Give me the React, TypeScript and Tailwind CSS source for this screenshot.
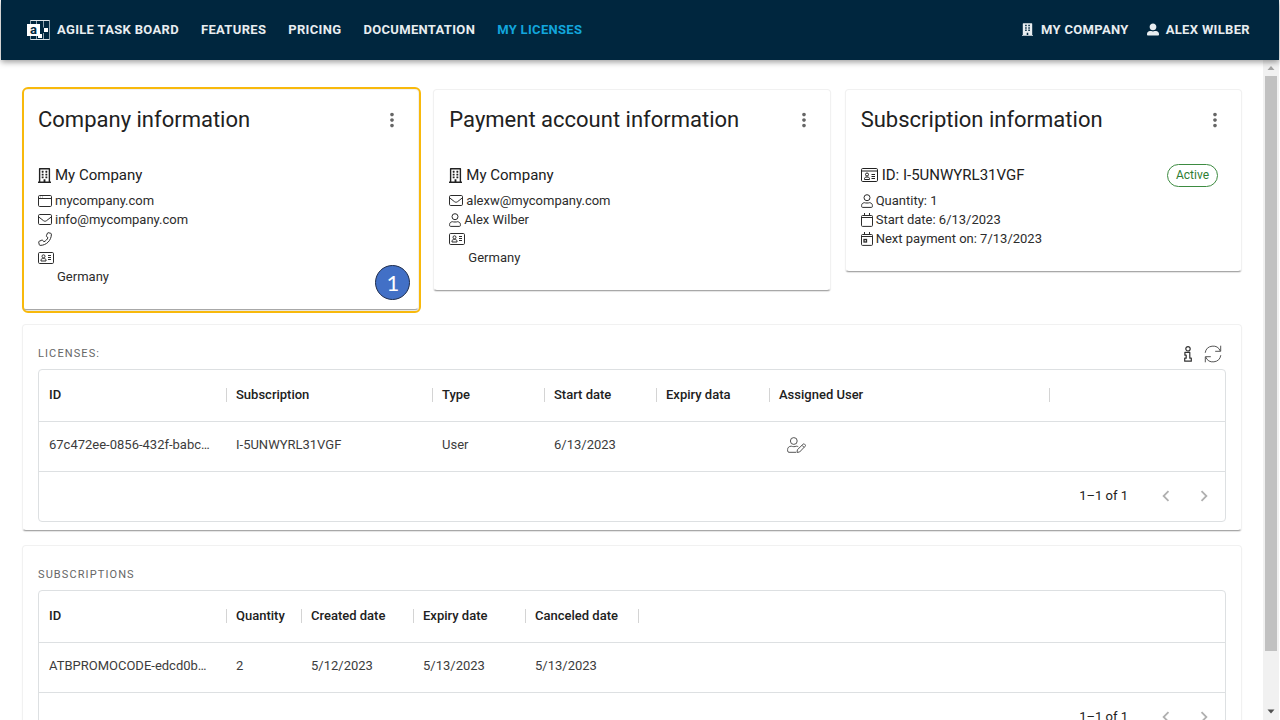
import type { ReactNode } from "react";
import { FaBuilding, FaRegBuilding, FaUserAlt } from "react-icons/fa";
import { MdChevronLeft, MdChevronRight, MdMoreVert } from "react-icons/md";

function Logo() {
  return (
    <svg className="h-5 w-[23px] normal-case" viewBox="0 0 23 20" fill="none" aria-hidden="true">
      <path d="M3.500 .5h19v19h-19zM9.500 .5v19M16.500 .5v7M16.500 13v6" stroke="#8fa3b0" />
      <path d="M3.500 .5h19M3.500 19.500h19" stroke="#dfe5e9" />
      <path d="M0 4h13v10h2v4h-4v-2H0z" fill="#fff" />
      <rect x="17" y="8" width="4" height="4" fill="#fff" />
      <text x="3" y="14" fontSize="13" fontWeight="700" fontFamily="Roboto, sans-serif" fill="#00263e">
        a
      </text>
    </svg>
  );
}

function WindowIcon() {
  return (
    <svg className="h-3 w-[14px]" viewBox="0 0 14 12" fill="none" stroke="currentColor" aria-hidden="true">
      <rect x=".5" y=".5" width="13" height="11" rx="1.200" />
      <path d="M.5 3.500h13" />
      <path d="M2 2h1M4 2h1" opacity=".5" />
    </svg>
  );
}

function EnvelopeIcon() {
  return (
    <svg className="h-[11px] w-[14px]" viewBox="0 0 14 11" fill="none" stroke="currentColor" aria-hidden="true">
      <rect x=".5" y=".5" width="13" height="10" rx="1.200" />
      <path d="M.8 3l4.700 3.700c.900.700 2.100.700 3 0L13.200 3" />
    </svg>
  );
}

function PhoneIcon() {
  return (
    <svg className="size-[14px]" viewBox="0 0 14 14" fill="none" stroke="currentColor" strokeLinejoin="round" aria-hidden="true">
      <path d="M10.200.7l2.500.6c.4.100.7.400.7.800C13.400 8.400 8.400 13.400 2.100 13.400c-.4 0-.7-.3-.8-.7l-.6-2.500c-.1-.4.100-.8.500-.9l2.700-1.200c.3-.1.700 0 .9.300l1.100 1.400c1.900-.9 3.300-2.300 4.100-4.100L8.600 4.600c-.3-.2-.4-.6-.2-.9L9.500 1.100c.1-.3.400-.4.700-.4z" />
    </svg>
  );
}

function AddressCardIcon() {
  return (
    <svg className="h-3 w-4" viewBox="0 0 16 12" fill="none" stroke="currentColor" aria-hidden="true">
      <rect x=".5" y=".5" width="15" height="11" rx="1.200" />
      <circle cx="5.500" cy="4.300" r="1.500" />
      <path d="M3 9V8c0-1 1-1.500 2.500-1.500S8 7 8 8v1zM10 3.500h3M10 5.500h3M10 7.500h3" />
    </svg>
  );
}

function IdCardIcon() {
  return (
    <svg className="h-[14px] w-[17px]" viewBox="0 0 17 14" fill="none" stroke="currentColor" aria-hidden="true">
      <rect x=".5" y=".5" width="16" height="13" rx="1.200" />
      <path d="M1 3h15" />
      <circle cx="6" cy="6.500" r="1.500" />
      <path d="M3.500 11.500v-1c0-1 1-1.500 2.500-1.500s2.500.5 2.500 1.500v1zM10.500 6.500H14M10.500 8.500H14M10.500 10.500H14" />
    </svg>
  );
}

function PersonIcon() {
  return (
    <svg className="h-[14px] w-3" viewBox="0 0 12 14" fill="none" stroke="currentColor" aria-hidden="true">
      <circle cx="6" cy="3.700" r="3" />
      <path d="M3.400 8.700C1.600 8.900.6 10 .6 11.400v1c0 .6.4 1 1 1h8.800c.6 0 1-.4 1-1v-1c0-1.400-1-2.500-2.800-2.700-1 .4-4.200.4-5.200 0z" />
    </svg>
  );
}

function CalendarIcon({ marked = false }: { marked?: boolean }) {
  return (
    <svg className="h-[14px] w-3" viewBox="0 0 12 14" fill="none" stroke="currentColor" aria-hidden="true">
      <rect x=".5" y="2.500" width="11" height="10.900" rx="1" />
      <path d="M.6 4.500h10.800M3.500 0v2.500M8.500 0v2.500" />
      {marked && <rect x="3" y="7.500" width="2.500" height="2.500" strokeWidth="1.300" />}
    </svg>
  );
}

function InfoIcon() {
  return (
    <svg className="h-4 w-2" viewBox="0 0 8 16" fill="none" stroke="currentColor" strokeWidth="1.200" strokeLinejoin="round" aria-hidden="true">
      <circle cx="4" cy="2.800" r="2.200" />
      <path d="M.9 6.400h4.900v5.800h1.500v3H.7v-3h1.500V9.200H.9z" />
    </svg>
  );
}

function RefreshIcon() {
  return (
    <svg className="size-[18px]" viewBox="0 0 18 18" fill="none" stroke="currentColor" aria-hidden="true">
      <path d="M1.200 7.800A7.900 7.900 0 0 1 16.300 6M16.800 10.200A7.900 7.900 0 0 1 1.700 12M16.700.7v5.600h-5.500M1.300 17.300v-5.600h5.500" />
    </svg>
  );
}

function UserEditIcon() {
  return (
    <svg className="h-4 w-[19px]" viewBox="0 0 19 16" fill="none" stroke="currentColor" strokeLinejoin="round" aria-hidden="true">
      <circle cx="6.800" cy="4" r="3.400" />
      <path d="M11.300 9.700c-.6-.3-1.300-.5-2-.5-1.500.6-3.500.6-5 0C2 9.200.6 10.600.6 12.600v1.300c0 .8.600 1.400 1.400 1.400h7.200M10 15.400l.4-2.600 5.700-5.700c.4-.4 1-.4 1.400 0l.7.700c.4.400.4 1 0 1.400L12.600 15zM15 8.300l2.100 2.100" />
    </svg>
  );
}

function InfoCard({
  title,
  heading,
  headingIcon,
  badge,
  children,
  overlay,
}: {
  title: string;
  heading: string;
  headingIcon: ReactNode;
  badge?: ReactNode;
  children: ReactNode;
  overlay?: ReactNode;
}) {
  return (
    <section className="relative rounded border border-[#f1f1f1] border-b-[#a8a8a8] bg-white px-[15px] pt-[14px] pb-[23px] shadow-[0_1px_1px_#e4e4e4]">
      <div className="flex items-center justify-between">
        <h2 className="text-[22px] leading-8 text-[#212121]">{title}</h2>
        <button type="button" aria-label={`${title} menu`} className="flex w-[22px] justify-center text-[#666]">
          <MdMoreVert className="size-[22px]" />
        </button>
      </div>
      <div className="mt-[27px] mb-1 flex h-6 items-center justify-between">
        <h3 className="flex items-center gap-1 text-[15px] leading-6 whitespace-nowrap">
          {headingIcon}
          {heading}
        </h3>
        {badge}
      </div>
      <ul className="text-[13px] text-[#2c2c2c]">{children}</ul>
      {overlay}
    </section>
  );
}

function InfoRow({ icon, children }: { icon: ReactNode; children?: ReactNode }) {
  return (
    <li className="flex h-[19px] items-center gap-[3px] leading-[19px]">
      {icon}
      {children}
    </li>
  );
}

type Column = { label: string; width: string };

function DataGrid({ label, columns, rows }: { label: string; columns: Column[]; rows: ReactNode[][] }) {
  return (
    <div className="rounded border border-[#dde0e2]">
      <table aria-label={label} className="w-full table-fixed border-separate border-spacing-0 text-left text-[13px]">
        <thead>
          <tr>
            {columns.map((column) => (
              <th
                key={column.label}
                scope="col"
                className={`${column.width} h-[52px] border-b border-[#dde0e2] p-0 pb-[2px] pl-[10px] font-medium whitespace-nowrap`}
              >
                <div className="-mr-px flex h-[14px] items-center justify-between border-r border-[#d4d4d4]">{column.label}</div>
              </th>
            ))}
            <td className="border-b border-[#dde0e2]" />
          </tr>
        </thead>
        <tbody>
          {rows.map((row, r) => (
            <tr key={r} className="text-[#3c3c3c]">
              {row.map((cell, c) => (
                <td key={c} className="h-[50px] border-b border-[#dde0e2] p-0 pb-[3px] pl-[10px] whitespace-nowrap">
                  {cell}
                </td>
              ))}
              <td className="border-b border-[#dde0e2]" />
            </tr>
          ))}
        </tbody>
      </table>
      <div className="flex h-[49px] items-center justify-end pr-[9px] pb-px text-[13px]">
        <span className="mr-[26px]">1–1 of 1</span>
        <div className="flex gap-[14px] text-[#b0b0b0]">
          <button type="button" aria-label="Previous page" disabled className="flex size-6 items-center justify-center">
            <MdChevronLeft className="size-[22px]" />
          </button>
          <button type="button" aria-label="Next page" disabled className="flex size-6 items-center justify-center">
            <MdChevronRight className="size-[22px]" />
          </button>
        </div>
      </div>
    </div>
  );
}

function Panel({ title, actions, children }: { title: string; actions?: ReactNode; children: ReactNode }) {
  return (
    <section className="mt-[14px] rounded border border-[#f1f1f1] border-b-[#a8a8a8] px-[15px] pt-[15px] pb-2 shadow-[0_1px_1px_#e4e4e4]">
      <div className="mb-px flex h-7 items-center justify-between pr-1">
        <h2 className="text-[11px] tracking-widest text-[#666] uppercase">{title}</h2>
        {actions}
      </div>
      {children}
    </section>
  );
}

const licenseColumns: Column[] = [
  { label: "ID", width: "w-[187px]" },
  { label: "Subscription", width: "w-[206px]" },
  { label: "Type", width: "w-[112px]" },
  { label: "Start date", width: "w-[112px]" },
  { label: "Expiry data", width: "w-[113px]" },
  { label: "Assigned User", width: "w-[280px]" },
];

const subscriptionColumns: Column[] = [
  { label: "ID", width: "w-[187px]" },
  { label: "Quantity", width: "w-[75px]" },
  { label: "Created date", width: "w-[112px]" },
  { label: "Expiry date", width: "w-[112px]" },
  { label: "Canceled date", width: "w-[113px]" },
];

const navLinks = ["Features", "Pricing", "Documentation"];

export default function App() {
  return (
    <div className="flex h-screen flex-col overflow-hidden bg-white px-px font-['Roboto',sans-serif] text-[#212121]">
      <header className="z-10 flex h-[60px] shrink-0 items-center justify-between bg-[#00263e] pr-[29px] pb-px pl-[26px] text-[13px] font-bold tracking-wide text-[#e8edf0] uppercase shadow-[0_2px_6px_#0006]">
        <nav className="flex items-center gap-[22px]">
          <a href="#home" className="flex items-center gap-[7px]">
            <Logo />
            Agile Task Board
          </a>
          {navLinks.map((link) => (
            <a key={link} href={`#${link.toLowerCase()}`}>
              {link}
            </a>
          ))}
          <a href="#licenses" aria-current="page" className="text-[#12a5dc]">
            My Licenses
          </a>
        </nav>
        <div className="flex items-center gap-[18px]">
          <a href="#company" className="flex items-center gap-2">
            <FaBuilding className="h-[13px] w-[11px]" />
            My Company
          </a>
          <a href="#account" className="flex items-center gap-[7px]">
            <FaUserAlt className="h-[13px] w-3" />
            Alex Wilber
          </a>
        </div>
      </header>

      <div className="flex min-h-0 flex-1">
        <main className="min-w-0 flex-1 overflow-hidden px-[21px] pt-[29px]">
          <div className="grid grid-cols-3 items-start gap-[14px]">
            <InfoCard
              title="Company information"
              heading="My Company"
              headingIcon={<FaRegBuilding className="h-[15px] w-[13px]" />}
              overlay={
                <>
                  <div className="pointer-events-none absolute -top-[3px] -right-[3px] -bottom-1 -left-px rounded-md border-2 border-[#f8b90c]" />
                  <span className="absolute right-2 bottom-[9px] flex size-[35px] items-center justify-center rounded-full border border-[#1f2d4d] bg-[#4270c6] font-['Lato',sans-serif] text-[22px] leading-none text-white">
                    1
                  </span>
                </>
              }
            >
              <InfoRow icon={<WindowIcon />}>mycompany.com</InfoRow>
              <InfoRow icon={<EnvelopeIcon />}>info@mycompany.com</InfoRow>
              <InfoRow icon={<PhoneIcon />} />
              <InfoRow icon={<AddressCardIcon />} />
              <InfoRow icon={<span className="w-4" />}>Germany</InfoRow>
            </InfoCard>

            <InfoCard
              title="Payment account information"
              heading="My Company"
              headingIcon={<FaRegBuilding className="h-[15px] w-[13px]" />}
            >
              <InfoRow icon={<EnvelopeIcon />}>alexw@mycompany.com</InfoRow>
              <InfoRow icon={<PersonIcon />}>Alex Wilber</InfoRow>
              <InfoRow icon={<AddressCardIcon />} />
              <InfoRow icon={<span className="w-4" />}>Germany</InfoRow>
            </InfoCard>

            <InfoCard
              title="Subscription information"
              heading="ID: I-5UNWYRL31VGF"
              headingIcon={<IdCardIcon />}
              badge={
                <span className="mr-2 flex h-[23px] items-center rounded-full border border-[#3d8b41] px-2 text-xs text-[#2e7d32]">
                  Active
                </span>
              }
            >
              <InfoRow icon={<PersonIcon />}>Quantity: 1</InfoRow>
              <InfoRow icon={<CalendarIcon />}>Start date: 6/13/2023</InfoRow>
              <InfoRow icon={<CalendarIcon marked />}>Next payment on: 7/13/2023</InfoRow>
            </InfoCard>
          </div>

          <Panel
            title="Licenses:"
            actions={
              <div className="flex items-center gap-3">
                <button type="button" aria-label="About licenses" className="text-[#333]">
                  <InfoIcon />
                </button>
                <button type="button" aria-label="Refresh licenses" className="text-[#555]">
                  <RefreshIcon />
                </button>
              </div>
            }
          >
            <DataGrid
              label="Licenses"
              columns={licenseColumns}
              rows={[
                [
                  "67c472ee-0856-432f-babc…",
                  "I-5UNWYRL31VGF",
                  "User",
                  "6/13/2023",
                  "",
                  <button key="assign" type="button" aria-label="Assign user" className="ml-2 flex text-[#555]">
                    <UserEditIcon />
                  </button>,
                ],
              ]}
            />
          </Panel>

          <Panel title="Subscriptions">
            <DataGrid
              label="Subscriptions"
              columns={subscriptionColumns}
              rows={[["ATBPROMOCODE-edcd0b…", "2", "5/12/2023", "5/13/2023", "5/13/2023"]]}
            />
          </Panel>
        </main>

        <div aria-hidden="true" className="flex w-4 shrink-0 flex-col items-center bg-[#f1f1f1]">
          <svg className="h-4 w-4 shrink-0" viewBox="0 0 16 16">
            <path d="M4.500 10h7L8 6z" fill="#a3a3a3" />
          </svg>
          <div className="w-3 flex-[575] bg-[#c1c1c1]" />
          <div className="flex-[53]" />
          <svg className="h-4 w-4 shrink-0" viewBox="0 0 16 16">
            <path d="M4.500 5.500h7L8 9.500z" fill="#505050" />
          </svg>
        </div>
      </div>
    </div>
  );
}
